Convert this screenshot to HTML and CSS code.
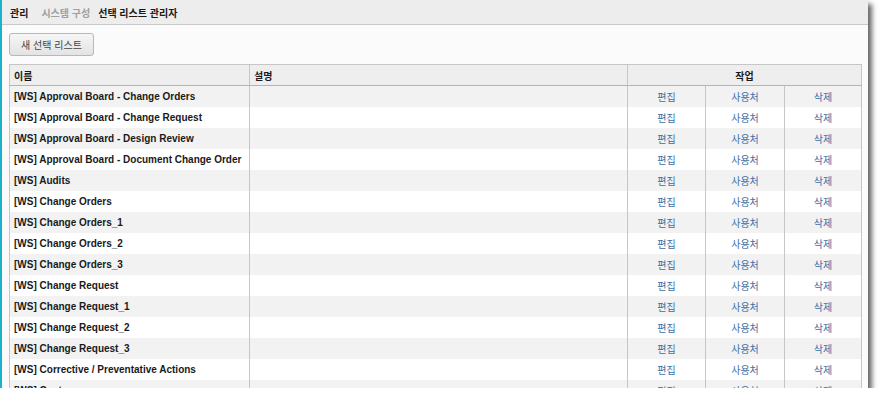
FILE: index.html
```html
<!DOCTYPE html>
<html lang="ko">
<head>
<meta charset="utf-8">
<title>선택 리스트 관리자</title>
<link rel="stylesheet" href="styles.css">
</head>
<body>
<div class="frame">
  <div class="crumbs">
    <span class="crumb strong">관리</span>
    <span class="crumb muted">시스템 구성</span>
    <span class="crumb strong">선택 리스트 관리자</span>
  </div>
  <div class="content">
    <button class="btn" type="button">새 선택 리스트</button>
    <table class="grid">
      <colgroup>
        <col class="c-name"><col class="c-desc"><col class="c-act"><col class="c-act2"><col class="c-act3">
      </colgroup>
      <thead>
        <tr><th class="left">이름</th><th class="left">설명</th><th colspan="3">작업</th></tr>
      </thead>
      <tbody>
        <tr><td class="name">[WS] Approval Board - Change Orders</td><td></td><td class="act"><a href="#">편집</a></td><td class="act"><a href="#">사용처</a></td><td class="act"><a href="#">삭제</a></td></tr>
        <tr><td class="name">[WS] Approval Board - Change Request</td><td></td><td class="act"><a href="#">편집</a></td><td class="act"><a href="#">사용처</a></td><td class="act"><a href="#">삭제</a></td></tr>
        <tr><td class="name">[WS] Approval Board - Design Review</td><td></td><td class="act"><a href="#">편집</a></td><td class="act"><a href="#">사용처</a></td><td class="act"><a href="#">삭제</a></td></tr>
        <tr><td class="name">[WS] Approval Board - Document Change Order</td><td></td><td class="act"><a href="#">편집</a></td><td class="act"><a href="#">사용처</a></td><td class="act"><a href="#">삭제</a></td></tr>
        <tr><td class="name">[WS] Audits</td><td></td><td class="act"><a href="#">편집</a></td><td class="act"><a href="#">사용처</a></td><td class="act"><a href="#">삭제</a></td></tr>
        <tr><td class="name">[WS] Change Orders</td><td></td><td class="act"><a href="#">편집</a></td><td class="act"><a href="#">사용처</a></td><td class="act"><a href="#">삭제</a></td></tr>
        <tr><td class="name">[WS] Change Orders_1</td><td></td><td class="act"><a href="#">편집</a></td><td class="act"><a href="#">사용처</a></td><td class="act"><a href="#">삭제</a></td></tr>
        <tr><td class="name">[WS] Change Orders_2</td><td></td><td class="act"><a href="#">편집</a></td><td class="act"><a href="#">사용처</a></td><td class="act"><a href="#">삭제</a></td></tr>
        <tr><td class="name">[WS] Change Orders_3</td><td></td><td class="act"><a href="#">편집</a></td><td class="act"><a href="#">사용처</a></td><td class="act"><a href="#">삭제</a></td></tr>
        <tr><td class="name">[WS] Change Request</td><td></td><td class="act"><a href="#">편집</a></td><td class="act"><a href="#">사용처</a></td><td class="act"><a href="#">삭제</a></td></tr>
        <tr><td class="name">[WS] Change Request_1</td><td></td><td class="act"><a href="#">편집</a></td><td class="act"><a href="#">사용처</a></td><td class="act"><a href="#">삭제</a></td></tr>
        <tr><td class="name">[WS] Change Request_2</td><td></td><td class="act"><a href="#">편집</a></td><td class="act"><a href="#">사용처</a></td><td class="act"><a href="#">삭제</a></td></tr>
        <tr><td class="name">[WS] Change Request_3</td><td></td><td class="act"><a href="#">편집</a></td><td class="act"><a href="#">사용처</a></td><td class="act"><a href="#">삭제</a></td></tr>
        <tr><td class="name">[WS] Corrective / Preventative Actions</td><td></td><td class="act"><a href="#">편집</a></td><td class="act"><a href="#">사용처</a></td><td class="act"><a href="#">삭제</a></td></tr>
        <tr><td class="name">[WS] Cost</td><td></td><td class="act"><a href="#">편집</a></td><td class="act"><a href="#">사용처</a></td><td class="act"><a href="#">삭제</a></td></tr>
      </tbody>
    </table>
  </div>
</div>
</body>
</html>
```
FILE: styles.css
```css
html, body {
  margin: 0;
  padding: 0;
  background: #ffffff;
}

body {
  font-family: "Liberation Sans", "Noto Sans CJK KR", sans-serif;
  color: #1a1a1a;
}

.frame {
  width: 866px;
  height: 388px;
  overflow: hidden;
  border-left: 2px solid #19b1cc;
  background: #fbfbfb;
  box-shadow: 4px 4px 5px rgba(0, 0, 0, 0.6);
}

.crumbs {
  height: 25px;
  box-sizing: border-box;
  display: flex;
  align-items: center;
  padding-left: 8px;
  background: #ededed;
  border-bottom: 1px solid #c9c9c9;
  font-size: 10px;
  font-weight: bold;
}

.crumb {
  margin-right: 13px;
}

.crumb.muted {
  color: #a0a0a0;
  margin-right: 8px;
}

.content {
  padding: 8px 0 0 7px;
}

.btn {
  display: block;
  width: 85px;
  height: 23px;
  margin: 0 0 8px 0;
  padding: 0;
  border: 1px solid #b8b8b8;
  border-radius: 3px;
  background: linear-gradient(#f6f6f6, #e3e3e3);
  font-family: "Liberation Sans", "Noto Sans CJK KR", sans-serif;
  font-size: 10px;
  color: #444;
}

.grid {
  width: 852px;
  table-layout: fixed;
  border-collapse: collapse;
  border: 1px solid #c6c6c6;
  background: #ffffff;
}

.c-name { width: 240px; }
.c-desc { width: 378px; }
.c-act { width: 78px; }
.c-act2 { width: 79px; }
.c-act3 { width: 77px; }

.grid th {
  height: 20px;
  padding: 0 4px;
  background: #eeeeee;
  border-left: 1px solid #c6c6c6;
  border-bottom: 1px solid #b4b4b4;
  font-size: 10px;
  font-weight: bold;
  text-align: center;
  color: #1a1a1a;
}

.grid th.left {
  text-align: left;
}

.grid td {
  height: 21px;
  padding: 0 4px;
  border-left: 1px solid #c6c6c6;
  font-size: 10px;
  white-space: nowrap;
  overflow: hidden;
}

.grid tbody tr:nth-child(odd) td {
  background: #f2f2f2;
}

.grid td.name {
  font-weight: bold;
  color: #1a1a1a;
}

.grid td.act {
  text-align: center;
}

.grid td.act a {
  color: #3c6ea6;
  text-decoration: none;
}
```
